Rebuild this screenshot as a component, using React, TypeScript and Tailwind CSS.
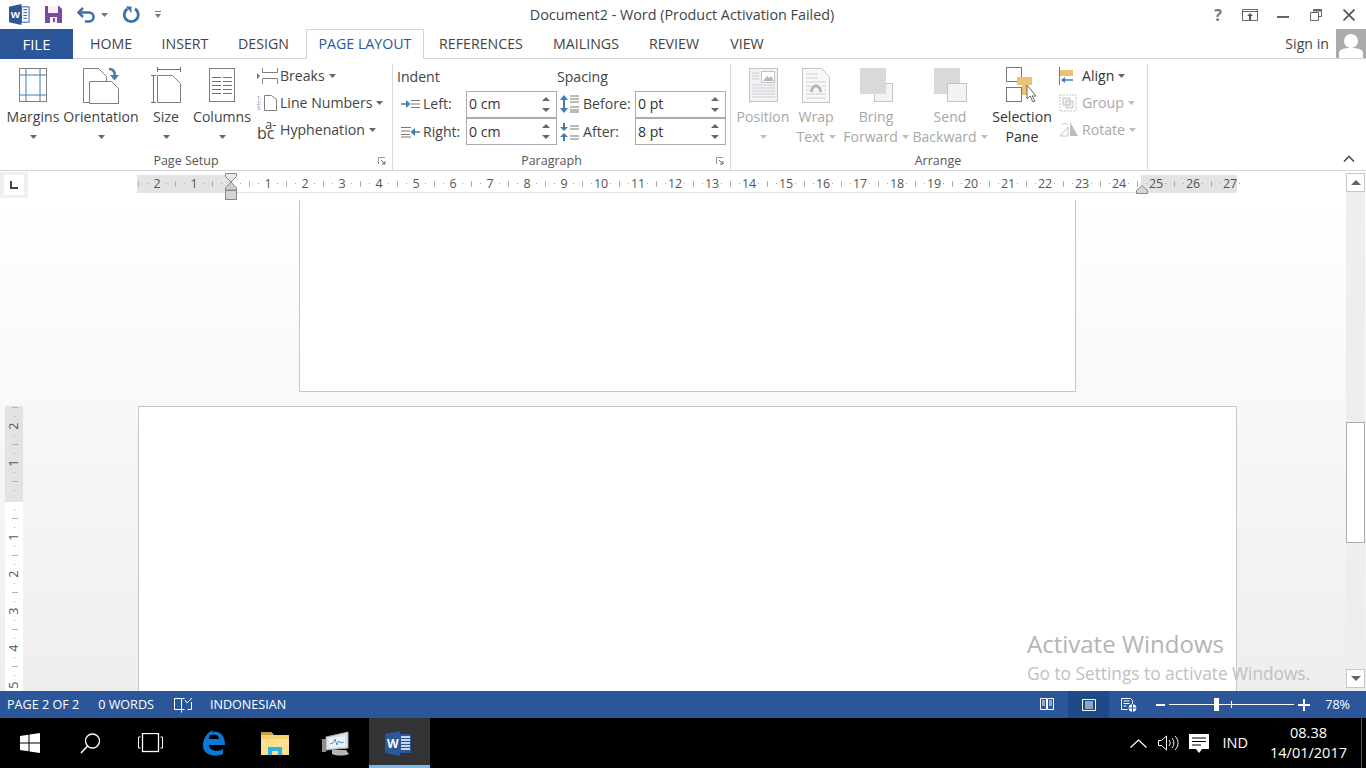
import React from "react";

const font = "[font-family:'Open_Sans','Noto_Sans',sans-serif]";

function Caret({ c = "#777", className = "" }: { c?: string; className?: string }) {
  return (
    <svg width="7" height="4" viewBox="0 0 7 4" className={className}>
      <path d="M0 0h7L3.5 4z" fill={c} />
    </svg>
  );
}

function WordIcon({ size = 22 }: { size?: number }) {
  return (
    <svg width={size} height={size} viewBox="0 0 22 22">
      <path d="M0 3 13 0v22L0 19z" fill="#2b579a" />
      <rect x="13" y="3" width="8" height="16" fill="#fff" stroke="#2b579a" />
      <path d="M15 6h4M15 9h4M15 12h4M15 15h4" stroke="#2b579a" />
      <text x="1.8" y="15" fontSize="10" fontWeight="700" fill="#fff" fontFamily="Open Sans">W</text>
    </svg>
  );
}

function BigButton({ w, label, label2, disabled, dark, icon, caret2 }: { w: number; label: string; label2?: string; disabled?: boolean; dark?: boolean; icon: React.ReactNode; caret2?: boolean }) {
  const color = disabled ? "text-[#a8a8a8]" : dark ? "text-[#333]" : "text-[#444]";
  const cc = disabled ? "#bdbdbd" : "#666";
  return (
    <div className="flex flex-col items-center shrink-0" style={{ width: w }}>
      <div className="h-[44px] pt-[5px] flex justify-center">{icon}</div>
      <div className={`h-[20px] leading-[20px] whitespace-nowrap ${color}`}>{label}</div>
      <div className={`h-[20px] leading-[20px] whitespace-nowrap flex items-center gap-[4px] ${color}`}>
        {label2 && <span>{label2}</span>}
        {(!label2 || caret2) && <Caret c={cc} />}
      </div>
    </div>
  );
}

const Line = "#7f7f7f";
const Blue = "#3e7cb1";

function SmallRow({ icon, label, disabled, dark }: { icon: React.ReactNode; label: string; disabled?: boolean; dark?: boolean }) {
  return (
    <div className={`h-[27px] flex items-center ${disabled ? "text-[#a8a8a8]" : dark ? "text-[#333]" : "text-[#444]"}`}>
      <div className="w-[23px] flex justify-start">{icon}</div>
      <span className="whitespace-nowrap">{label}</span>
      <Caret c={disabled ? "#bdbdbd" : "#666"} className="ml-[4px]" />
    </div>
  );
}

function Spin({ value }: { value: string }) {
  return (
    <div className="w-[91px] h-[27px] shrink-0 border border-[#ababab] bg-white flex items-center pl-[2px] pr-[6px] text-[#333] justify-between">
      <span>{value}</span>
      <svg width="8" height="15" viewBox="0 0 8 15">
        <path d="M0 4 4 0l4 4zM0 11l4 4 4-4z" fill="#666" />
      </svg>
    </div>
  );
}

function Launcher({ className = "" }: { className?: string }) {
  return (
    <svg width="8" height="8" viewBox="0 0 8 8" className={className}>
      <path d="M.5 7V.5H7" fill="none" stroke="#999" />
      <path d="M3 3l4 4M7 4v3H4" fill="none" stroke="#666" />
    </svg>
  );
}

function Group({ w, label, children, launcher }: { w: number; label: string; children: React.ReactNode; launcher?: boolean }) {
  return (
    <div className="shrink-0 relative h-[106px] mt-[5px] border-r border-[#d9d9d9]" style={{ width: w }}>
      <div className="flex h-[88px] -mt-[1px]">{children}</div>
      <div className={`absolute left-0 right-0 top-[88px] text-center text-[12.5px] leading-[17px] text-[#555] ${launcher ? "pr-[20px]" : "pr-[2px]"}`}>{label}</div>
      {launcher && <Launcher className="absolute right-[6px] top-[93px]" />}
    </div>
  );
}

function RulerH() {
  const slots: React.ReactNode[] = [];
  for (let i = -10; i <= 109; i++) {
    const q = ((i % 4) + 4) % 4;
    let c: React.ReactNode = null;
    if (q === 0 && i !== 0) c = <span className="text-[12.5px] leading-none text-[#555] pt-[2px]">{Math.abs(i / 4)}</span>;
    else if (q === 2) c = <span className="w-px h-[6px] bg-[#b0b0b0]" />;
    else if (q !== 0) c = <span className="w-px h-px bg-[#aaa]" />;
    slots.push(
      <div key={i} className="w-[9.25px] shrink-0 flex justify-center items-center h-full overflow-visible">
        {c}
      </div>
    );
  }
  return (
    <div className="absolute left-[137px] top-[4px] w-[1100px] h-[18px] bg-white border-b border-[#e6e6e6]">
      <div className="absolute left-0 top-0 bottom-0 w-[94px] bg-[#e3e3e3]" />
      <div className="absolute right-0 top-0 bottom-0 w-[96px] bg-[#e3e3e3]" />
      <div className="absolute left-[-3.1px] top-0 bottom-0 flex">{slots}</div>
      <svg width="14" height="28" viewBox="0 0 14 28" className="absolute left-[87px] top-[-2px]">
        <path d="M1.5.5h11v3L7 9 1.5 3.500z" fill="#e6e6e6" stroke="#8a8a8a" />
        <path d="M7 9l5.500 6v2h-11v-2z" fill="#cfcfcf" stroke="#8a8a8a" />
        <rect x="1.5" y="17.500" width="11" height="9" fill="#d4d4d4" stroke="#8a8a8a" />
      </svg>
      <svg width="12" height="9" viewBox="0 0 12 9" className="absolute left-[999px] top-[10px]">
        <path d="M6 .5l5.500 5v3H.5v-3z" fill="#d6d6d6" stroke="#8a8a8a" />
      </svg>
    </div>
  );
}

function RulerV() {
  const rows: React.ReactNode[] = [];
  for (let i = -10; i <= 20; i++) {
    const q = ((i % 4) + 4) % 4;
    let c: React.ReactNode = null;
    if (q === 0 && i !== 0) c = <span className="text-[12.5px] leading-none text-[#555] -rotate-90 block">{Math.abs(i / 4)}</span>;
    else if (q === 2) c = <span className="h-px w-[6px] bg-[#b0b0b0]" />;
    else if (q !== 0) c = <span className="w-px h-px bg-[#aaa]" />;
    rows.push(
      <div key={i} className="h-[9.25px] flex items-center justify-center shrink-0 pl-[1px]">
        {c}
      </div>
    );
  }
  return (
    <div className="w-[29px] shrink-0 pt-[206px] pl-[5px] overflow-hidden">
      <div className="relative w-[18px] h-[285px] bg-white">
        <div className="absolute left-0 right-0 top-0 h-[96px] bg-[#e3e3e3]" />
        <div className="absolute left-0 right-0 top-[-3px] flex flex-col">{rows}</div>
      </div>
    </div>
  );
}

function Scrollbar() {
  const Btn = ({ up }: { up?: boolean }) => (
    <div className="w-[19px] h-[19px] border border-[#c6c6c6] bg-white flex items-center justify-center shrink-0">
      <svg width="10" height="5" viewBox="0 0 10 5">
        <path d={up ? "M0 5 5 0l5 5z" : "M0 0l5 5 5-5z"} fill="#666" />
      </svg>
    </div>
  );
  return (
    <div className="absolute right-0 top-[2px] bottom-0 w-[20px] flex flex-col pb-[3px]">
      <Btn up />
      <div className="flex-1 min-h-0 pt-[230px] bg-[#eeeeee] w-[19px]">
        <div className="w-[19px] h-[121px] bg-white border border-[#ababab]" />
      </div>
      <Btn />
    </div>
  );
}

export default function App() {
  return (
    <div className={`w-[1366px] h-[768px] overflow-hidden flex flex-col bg-white text-[14.1px] ${font}`}>
      {/* Title bar */}
      <div className="h-[29px] flex items-center shrink-0">
        <div className="w-[200px] flex items-center pl-[9px] shrink-0">
          <WordIcon size={21} />
          <svg width="17" height="17" viewBox="0 0 17 17" className="ml-[15px]">
            <path d="M0 0h14l3 3v14H0z" fill="#7b4a9c" />
            <rect x="3" y="0" width="10" height="7" fill="#f6f0fa" />
            <rect x="5" y="11" width="7" height="6" fill="#f6f0fa" />
            <rect x="8" y="12" width="2" height="4" fill="#7b4a9c" />
          </svg>
          <svg width="19" height="16" viewBox="0 0 19 16" className="ml-[15px]">
            <path d="M6 1 1.500 5.500 6 10" fill="none" stroke="#3e71a8" strokeWidth="2.500" />
            <path d="M2 5.500h10c6 0 6 9 0 9H8" fill="none" stroke="#3e71a8" strokeWidth="2.500" />
          </svg>
          <Caret c="#777" className="ml-[5px]" />
          <svg width="18" height="18" viewBox="0 0 18 18" className="ml-[14px]">
            <path d="M5.500 2.800A7 7 0 1 0 13 2.800" fill="none" stroke="#3e71a8" strokeWidth="2.800" />
            <path d="M4 .5h5.500V7z" fill="#3e71a8" />
          </svg>
          <svg width="6" height="7" viewBox="0 0 6 7" className="ml-[15px]">
            <path d="M0 .5h6" stroke="#777" />
            <path d="M0 3h6L3 7z" fill="#777" />
          </svg>
        </div>
        <div className="flex-1 text-center text-[14.35px] text-[#444] whitespace-nowrap pr-[2px]">Document2 - Word (Product Activation Failed)</div>
        <div className="w-[200px] flex items-center justify-end shrink-0 pr-[11px]">
          <span className="text-[16px] font-bold text-[#777] leading-none mr-[20px]">?</span>
          <svg width="16" height="12" viewBox="0 0 16 12" className="mr-[19px]">
            <path d="M.5.5h15v11H.5zM.5 2.500h15" fill="none" stroke="#666" />
            <path d="M8 4l3 3H9v4H7V7H5z" fill="#555" />
          </svg>
          <svg width="12" height="2" viewBox="0 0 12 2" className="mr-[21px] mt-[4px]">
            <rect width="12" height="2" fill="#666" />
          </svg>
          <svg width="12" height="12" viewBox="0 0 12 12" className="mr-[21px]">
            <path d="M3.500 2.500v-2h8v7h-3M.5 3.500h8v8h-8zM.5 3.500" fill="none" stroke="#666" />
            <path d="M3.500 .5h8v2h-8z" fill="#666" />
          </svg>
          <svg width="12" height="12" viewBox="0 0 12 12">
            <path d="M.5.5l11 11M11.500.5l-11 11" stroke="#555" strokeWidth="1.700" />
          </svg>
        </div>
      </div>

      {/* Tabs */}
      <div className="h-[30px] flex shrink-0 border-b border-[#d4d4d4] relative text-[#444] text-[14.2px]">
        <div className="w-[73px] h-[30px] bg-[#2b579a] text-white flex items-center justify-center text-[15px]">FILE</div>
        <div className="w-[76px] flex items-center justify-center">HOME</div>
        <div className="w-[72px] flex items-center justify-center">INSERT</div>
        <div className="w-[85px] flex items-center justify-center">DESIGN</div>
        <div className="w-[118px] h-[30px] border border-[#d4d4d4] border-b-white bg-white text-[#2b579a] flex items-center justify-center">PAGE LAYOUT</div>
        <div className="w-[114px] flex items-center justify-center">REFERENCES</div>
        <div className="w-[96px] flex items-center justify-center">MAILINGS</div>
        <div className="w-[80px] flex items-center justify-center">REVIEW</div>
        <div className="w-[66px] flex items-center justify-center">VIEW</div>
        <div className="flex-1 flex items-center justify-end">
          <span className="mr-[7px]">Sign in</span>
          <div className="w-[30px] h-[29px] bg-[#ababab] overflow-hidden flex items-end justify-center">
            <svg width="26" height="26" viewBox="0 0 26 26">
              <circle cx="13" cy="9" r="7" fill="#fff" />
              <path d="M1 26v-5c0-4 6-5 12-5s12 1 12 5v5z" fill="#fff" />
            </svg>
          </div>
        </div>
      </div>

      {/* Ribbon */}
      <div className="h-[112px] flex shrink-0 relative border-b border-[#d4d4d4]">
        <Group w={393} label="Page Setup" launcher>
          <BigButton w={66} label="Margins" icon={
            <svg width="28" height="34" viewBox="0 0 28 34">
              <rect x=".5" y=".5" width="27" height="33" fill="#fff" stroke={Line} />
              <path d="M7 1v32M21 1v32M1 7h26M1 27h26" stroke={Blue} />
            </svg>
          } />
          <BigButton w={70} label="Orientation" icon={
            <svg width="37" height="38" viewBox="0 0 37 38" className="-mt-[1px]">
              <path d="M.5 1.500h15l8 8v26H.5z" fill="#fff" stroke={Line} />
              <path d="M6.500 14.500h22l7 7v15h-29z" fill="#fff" stroke={Line} />
              <path d="M26 2c4 0 6 3 6 7" fill="none" stroke={Blue} strokeWidth="2.600" />
              <path d="M27 8h9l-4.500 5.500z" fill={Blue} />
            </svg>
          } />
          <BigButton w={60} label="Size" icon={
            <svg width="30" height="36" viewBox="0 0 30 36" className="-mt-[1px]">
              <path d="M6.500 0v5M29.500 0v5M6.500 2.500h23M0 8.500h5M0 35.500h5M2.500 8.500v27" fill="none" stroke={Blue} />
              <path d="M6.500 8.500h15l8 8v19h-23z" fill="#fff" stroke={Line} />
            </svg>
          } />
          <BigButton w={52} label="Columns" icon={
            <svg width="26" height="34" viewBox="0 0 26 34">
              <rect x=".5" y=".5" width="25" height="33" fill="#fff" stroke={Line} />
              <path d="M3 9.500h9M14 9.500h9M3 13.500h9M14 13.500h9M3 17.500h9M14 17.500h9M3 21.500h9M14 21.500h9M3 25.500h9M14 25.500h9" stroke={Blue} />
            </svg>
          } />
          <div className="ml-[9px] -mt-[1px]">
            <SmallRow label="Breaks" icon={
              <svg width="21" height="16" viewBox="0 0 21 16">
                <path d="M5.500 0v4.500h15V0M5.500 16v-5.500h15V16" stroke={Line} fill="none" />
                <path d="M0 5l3 3-3 3z" fill={Blue} />
              </svg>
            } />
            <SmallRow label="Line Numbers" icon={
              <svg width="20" height="16" viewBox="0 0 20 16">
                <path d="M7.500.5h7l5 4v11h-12z" fill="#fff" stroke={Line} />
                <text x="0" y="5" fontSize="4.800" fill={Blue} fontFamily="Open Sans">1:</text>
                <text x="0" y="10" fontSize="4.800" fill={Blue} fontFamily="Open Sans">2:</text>
                <text x="0" y="15" fontSize="4.800" fill={Blue} fontFamily="Open Sans">3:</text>
              </svg>
            } />
            <SmallRow label="Hyphenation" icon={
              <span className="relative block w-[20px] h-[18px] text-[#444] leading-none">
                <span className="absolute left-[8px] top-[-1px] text-[13px] leading-[8px]">a-</span>
                <span className="absolute left-0 top-[7px] text-[16px] leading-[11px]">bc</span>
              </span>
            } />
          </div>
        </Group>

        <Group w={338} label="Paragraph" launcher>
          <div className="w-[164px] pl-[4px] shrink-0">
            <div className="h-[27px] leading-[27px]">
              <span className="text-[#444]">Indent</span>
            </div>
            <div className="flex items-center h-[28px] pl-[4px] text-[#444]">
              <svg width="19" height="10" viewBox="0 0 19 10" className="mr-[3px] shrink-0">
                <path d="M0 5h7" stroke={Blue} strokeWidth="1.500" />
                <path d="M5 1 9.500 5 5 9z" fill={Blue} />
                <path d="M10 1.500h9M10 5h9M10 8.500h9" stroke="#777" />
              </svg>
              <span className="w-[43px] shrink-0">Left:</span>
              <Spin value="0 cm" />
            </div>
            <div className="flex items-center h-[27px] pl-[4px] text-[#444]">
              <svg width="19" height="12" viewBox="0 0 19 12" className="mr-[3px] shrink-0">
                <path d="M0 1.500h10M0 5h9M0 8.500h9M0 11h10" stroke="#777" />
                <path d="M12 6h7" stroke={Blue} strokeWidth="1.500" />
                <path d="M14 2 9.500 6 14 10z" fill={Blue} />
              </svg>
              <span className="w-[43px] shrink-0">Right:</span>
              <Spin value="0 cm" />
            </div>
          </div>
          <div className="shrink-0">
            <div className="h-[27px] leading-[27px] text-[#444]">Spacing</div>
            <div className="flex items-center h-[28px] pl-[3px] text-[#444]">
              <svg width="20" height="18" viewBox="0 0 20 18" className="mr-[3px] shrink-0">
                <path d="M4 3v12" stroke={Blue} strokeWidth="2" />
                <path d="M0 5l4-5 4 5zM0 13l4 5 4-5z" fill={Blue} />
                <path d="M10 1h9M10 4h9M10 7h9M10 12h9M10 15h9M10 17h9" stroke="#777" />
              </svg>
              <span className="w-[52px] shrink-0">Before:</span>
              <Spin value="0 pt" />
            </div>
            <div className="flex items-center h-[27px] pl-[3px] text-[#444]">
              <svg width="20" height="18" viewBox="0 0 20 18" className="mr-[3px] shrink-0">
                <path d="M4 0v4M4 14v4" stroke={Blue} strokeWidth="2" />
                <path d="M0 4h8L4 8zM0 14h8l-4-4z" fill={Blue} />
                <path d="M10 3h9M10 6h9M10 13h9M10 16h9" stroke="#777" />
              </svg>
              <span className="w-[52px] shrink-0">After:</span>
              <Spin value="8 pt" />
            </div>
          </div>
        </Group>

        <Group w={417} label="Arrange">
          <div className="w-[5px] shrink-0" />
          <BigButton w={54} disabled label="Position" icon={
            <svg width="29" height="34" viewBox="0 0 29 34">
              <rect x=".5" y=".5" width="28" height="33" fill="#f3f0f5" stroke="#c4c4c4" />
              <rect x="12.500" y="3.500" width="13" height="11" fill="#fff" stroke="#c4c4c4" />
              <path d="M14 13l4-5 2 2 2-2 3 5z" fill="#b8b8b8" />
              <path d="M3 5h7M3 8h7M3 11h7M3 17h23M3 20h23M3 23h23M3 26h23M3 29h23" stroke="#cfcfcf" />
            </svg>
          } />
          <BigButton w={52} disabled label="Wrap" label2="Text" caret2 icon={
            <svg width="28" height="35" viewBox="0 0 28 35">
              <path d="M.5.5h19l8 8v26H.5z" fill="#f8f7f9" stroke="#c4c4c4" />
              <path d="M4 6h12M4 10h12M4 14h20M4 18h5M20 18h4M4 22h3M22 22h2M4 26h20M4 30h20" stroke="#cfcfcf" />
              <path d="M8 24c0-10 12-10 12 0h-3c0-6-6-6-6 0z" fill="#b8b8b8" />
            </svg>
          } />
          <BigButton w={68} disabled label="Bring" label2="Forward" caret2 icon={
            <svg width="33" height="34" viewBox="0 0 33 34">
              <rect x="14.500" y="15.500" width="18" height="18" fill="#f4f2f5" stroke="#c4c4c4" />
              <rect x="0" y="0" width="26" height="26" fill="#dbd8db" />
            </svg>
          } />
          <BigButton w={80} disabled label="Send" label2="Backward" caret2 icon={
            <svg width="33" height="34" viewBox="0 0 33 34">
              <rect x="0" y="0" width="26" height="26" fill="#dbd8db" />
              <rect x="13.500" y="15.500" width="19" height="18" fill="#f4f2f5" stroke="#c4c4c4" />
            </svg>
          } />
          <BigButton w={64} dark label="Selection" label2="Pane" icon={
            <svg width="33" height="36" viewBox="0 0 33 36" className="-mt-[1px]">
              <rect x=".5" y=".5" width="15" height="14" fill="#fff" stroke="#777" />
              <rect x=".5" y="20.500" width="15" height="14" fill="#fff" stroke="#777" />
              <path d="M11 10h15v8h-4v10h-6V18h-5z" fill="#ecc278" />
              <path d="M21 18v14l3-3 3 6 2-1-3-5h4z" fill="#fff" stroke="#666" />
            </svg>
          } />
          <div className="ml-[5px] -mt-[1px]">
            <SmallRow dark label="Align" icon={
              <svg width="16" height="18" viewBox="0 0 16 18">
                <path d="M.5 0v18" stroke="#777" />
                <rect x="1" y="3" width="13" height="6" fill="#ecc278" />
                <path d="M14 13H5" stroke={Blue} strokeWidth="1.500" />
                <path d="M6 10l-4 3 4 3z" fill={Blue} />
              </svg>
            } />
            <SmallRow disabled label="Group" icon={
              <svg width="18" height="18" viewBox="0 0 18 18">
                <path d="M1 1h16v16H1z" fill="none" stroke="#c4c4c4" strokeDasharray="2 1" />
                <path d="M4 4h7v7H4zM7 7h7v7H7z" fill="#f0f0f0" stroke="#c4c4c4" />
              </svg>
            } />
            <SmallRow disabled label="Rotate" icon={
              <svg width="20" height="15" viewBox="0 0 20 15">
                <path d="M11 0v14H19z" fill="#bdbdbd" />
                <path d="M1 14 9 5v9z" fill="none" stroke="#c4c4c4" />
                <path d="M3 3c2-2 4-2 6 0" fill="none" stroke="#c4c4c4" />
              </svg>
            } />
          </div>
        </Group>
        <svg width="12" height="7" viewBox="0 0 12 7" className="absolute left-[1343px] top-[96px]">
          <path d="M1 6.500 6 1.500l5 5" fill="none" stroke="#555" strokeWidth="1.700" />
        </svg>
      </div>

      {/* Ruler row + document + scrollbar */}
      <div className="relative flex-1 min-h-0 flex flex-col">
        <div className="h-[29px] shrink-0 relative bg-white">
          <div className="absolute left-0 top-[1px] w-[28px] h-[26px] bg-[#f0f0f0] p-[3px] pl-[4px]">
            <div className="w-[20px] h-[20px] bg-white flex items-center justify-center">
              <svg width="8" height="8" viewBox="0 0 8 8">
                <path d="M1 0v7h7" fill="none" stroke="#444" strokeWidth="2" />
              </svg>
            </div>
          </div>
          <RulerH />
        </div>

        <div className="flex-1 min-h-0 flex bg-gradient-to-b from-white to-[#eeeeee] overflow-hidden">
          <RulerV />
          <div className="flex-1 flex flex-col items-center min-w-0 mr-[20px]">
            <div className="w-[777px] h-[192px] shrink-0 bg-white border border-t-0 border-[#c6c6c6]" />
            <div className="w-[1099px] h-[300px] shrink-0 mt-[14px] bg-white border border-b-0 border-[#c6c6c6]" />
          </div>
        </div>
        <Scrollbar />
        <div className="absolute left-[1027px] top-[457px] whitespace-nowrap text-[#b4b4b4] pointer-events-none">
          <div className="text-[24px] leading-[32px]">Activate Windows</div>
          <div className="text-[17.3px] leading-[24px] mt-[2px] text-[#c0c0c0]">Go to Settings to activate Windows.</div>
        </div>
      </div>

      {/* Status bar */}
      <div className="h-[27px] shrink-0 bg-[#2b579a] text-white text-[12.6px] flex items-center">
        <span className="ml-[7px] pt-px">PAGE 2 OF 2</span>
        <span className="ml-[19px] pt-px">0 WORDS</span>
        <svg width="19" height="16" viewBox="0 0 19 16" className="ml-[20px]">
          <path d="M.5 1.500h7v11h-7zM7.500 1.500h3M10.500 12.500h-3M7.500 12.500v3M17.500 5v7.500h-4" fill="none" stroke="#fff" />
          <path d="M11 3l2 3 5-5" fill="none" stroke="#fff" />
        </svg>
        <span className="ml-[17px] pt-px">INDONESIAN</span>
        <div className="flex-1" />
        <div className="flex items-center h-full">
          <svg width="14" height="13" viewBox="0 0 14 13" className="mr-[14px]">
            <path d="M.5.5h6v11h-6zM7.500.5h6v11h-6zM2 3h3M2 5h3M2 7h3M9 3h3M9 5h3M9 7h3" fill="none" stroke="#fff" />
          </svg>
          <div className="w-[41px] h-full bg-[#1f4a88] flex items-center justify-center">
            <svg width="14" height="12" viewBox="0 0 14 12">
              <path d="M.5.5h13v11H.5zM3 3h8M3 5h8M3 7h8M3 9h8" fill="none" stroke="#fff" />
            </svg>
          </div>
          <svg width="16" height="14" viewBox="0 0 16 14" className="ml-[12px]">
            <path d="M.5.5h9l2 2V7M.5.5v11h6M2.500 3h6M2.500 5.500h6M2.500 8h3" fill="none" stroke="#fff" />
            <circle cx="11.500" cy="10" r="3.800" fill="#fff" />
            <path d="M8 10h7M11.500 6v8" stroke="#2b579a" />
          </svg>
          <div className="ml-[19px] w-[9px] h-[2px] bg-white" />
          <div className="ml-[4px] relative w-[125px] h-px bg-white">
            <div className="absolute left-[45px] top-[-6px] w-[5px] h-[13px] bg-white" />
            <div className="absolute left-[62px] top-[-3px] w-px h-[7px] bg-white" />
          </div>
          <svg width="12" height="12" viewBox="0 0 12 12" className="ml-[4px]">
            <path d="M0 6h12M6 0v12" stroke="#fff" strokeWidth="2" />
          </svg>
          <span className="ml-[15px] mr-[16px] pt-px">78%</span>
        </div>
      </div>

      {/* Taskbar */}
      <div className="h-[50px] shrink-0 bg-black flex items-center text-white relative">
        <svg width="20" height="20" viewBox="0 0 20 20" className="ml-[20px]">
          <path d="M0 3l8.500-1.300V9.500H0zM9.500 1.500 20 0v9.500H9.500zM0 10.500h8.500v7.800L0 17zM9.500 10.500H20V20L9.500 18.500z" fill="#fff" />
        </svg>
        <svg width="21" height="21" viewBox="0 0 21 21" className="ml-[40px]">
          <circle cx="12.500" cy="8" r="7" fill="none" stroke="#fff" strokeWidth="1.300" />
          <path d="M7.500 13 1 20" stroke="#fff" strokeWidth="1.500" />
        </svg>
        <svg width="25" height="20" viewBox="0 0 25 20" className="ml-[37px]">
          <rect x="4.500" y=".5" width="16" height="18" fill="none" stroke="#fff" strokeWidth="1.300" />
          <path d="M2.500 4H.5v11h2M22.500 4h2v11h-2" fill="none" stroke="#fff" />
        </svg>
        <svg width="25" height="26" viewBox="0 0 25 26" className="ml-[38px]">
          <path d="M24 15H8c.5 6 9 7.500 14 4v5c-8 4-21 1-20-10C3 6 8 1 13 0 9 3 8 6 8 9h10c0-5-6-6-13-2 4-7 19-9 19 8z" fill="#0a78d4" />
        </svg>
        <svg width="28" height="25" viewBox="0 0 28 25" className="ml-[35px]">
          <path d="M0 1h10l3 3h15v20H0z" fill="#f4cf6a" />
          <path d="M0 1h10l3 3H0z" fill="#c79f3c" />
          <rect x="0" y="8" width="28" height="16" fill="#fbe08e" />
          <path d="M7 24v-8h14v8h-4v-4h-6v4z" fill="#2bb4e8" />
        </svg>
        <svg width="28" height="25" viewBox="0 0 28 25" className="ml-[33px]">
          <path d="M4 6 26 1v16L4 19z" fill="#dfe3e6" stroke="#a9a9a9" />
          <path d="M7 8l16-3v10L7 17z" fill="#eaf4fb" />
          <path d="M8 13l3-1 2-4 2 6 2-4 2 2 3-1" fill="none" stroke="#4f8fc4" />
          <path d="M10 19h14l3 4c-5 2-12 2-17 0z" fill="#b5b5b5" />
          <rect x="0" y="8" width="4" height="13" fill="#8d8d8d" />
        </svg>
        <div className="ml-[19px] w-[61px] h-[50px] bg-[#333333] border-b-[3px] border-[#76b9ed] flex items-center justify-center">
          <svg width="27" height="25" viewBox="0 0 27 25" className="mt-[3px] -ml-[2px]">
            <path d="M0 3 15 0v25L0 22z" fill="#2b579a" />
            <rect x="15" y="3" width="11" height="19" fill="#2b579a" />
            <path d="M16 6h9M16 9h9M16 12h9M16 15h9M16 18h9" stroke="#fff" strokeWidth="1.500" />
            <text x="2" y="17" fontSize="12" fontWeight="700" fill="#fff" fontFamily="Open Sans">W</text>
          </svg>
        </div>
        <div className="flex-1" />
        <svg width="17" height="9" viewBox="0 0 17 9">
          <path d="M.5 8.500 8.500 1l8 7.500" fill="none" stroke="#fff" strokeWidth="1.200" />
        </svg>
        <svg width="21" height="16" viewBox="0 0 21 16" className="ml-[11px]">
          <path d="M.5 5.500h3l5-4.500v14l-5-4.500h-3z" fill="none" stroke="#fff" />
          <path d="M11 5c1.500 2 1.500 4 0 6M14 3c2.500 3 2.500 7 0 10M17 1c4 4 4 10 0 14" fill="none" stroke="#fff" />
        </svg>
        <svg width="20" height="19" viewBox="0 0 20 19" className="ml-[10px]">
          <path d="M0 0h20v15h-7l-3 4-3-4H0z" fill="#fff" />
          <path d="M3 4h14M3 7.500h14M3 11h9" stroke="#000" />
        </svg>
        <span className="ml-[14px] text-[14.5px]">IND</span>
        <div className="ml-[22px] mr-[19px] w-[77px] text-center text-[14.5px] leading-[20px] -mt-[1px]">
          <div>08.38</div>
          <div className="whitespace-nowrap">14/01/2017</div>
        </div>
        <div className="absolute right-[4px] top-0 bottom-0 w-px bg-[#555]" />
      </div>
    </div>
  );
}
